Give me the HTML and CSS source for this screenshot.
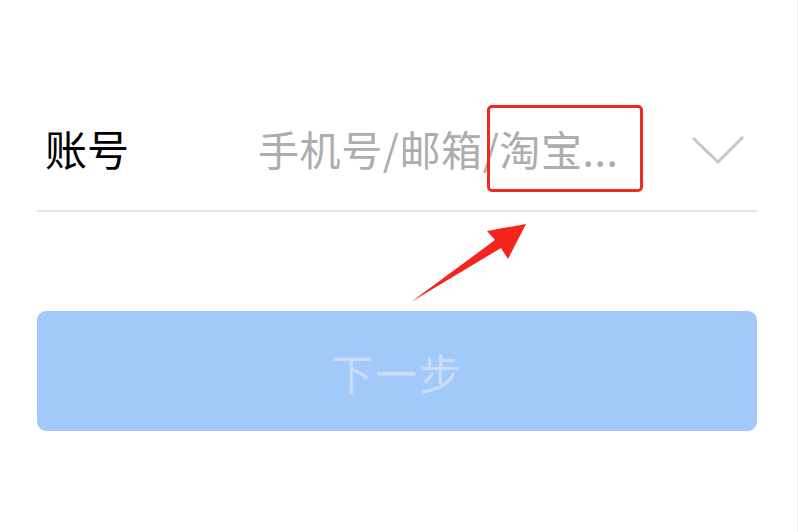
FILE: index.html
```html
<!DOCTYPE html>
<html lang="zh-CN">
<head>
<meta charset="utf-8">
<title>账号</title>
<link rel="stylesheet" href="styles.css">
</head>
<body>
<div class="page">
  <div class="form">
    <div class="field">
      <span class="label">账号</span>
      <span class="placeholder">手机号/邮箱/淘宝...</span>
      <svg class="chevron" width="56" height="32" viewBox="0 0 56 32">
        <polyline points="3,3 28,27 53,2" fill="none" stroke="#c6c6c6" stroke-width="3"/>
      </svg>
    </div>
    <button class="next">下一步</button>
  </div>
  <div class="highlight"></div>
  <svg class="arrow" width="798" height="532" viewBox="0 0 798 532">
    <polygon points="411,302 495,240 487,231 526,224 508,259 501,248" fill="#f5241c"/>
  </svg>
</div>
</body>
</html>
```

FILE: styles.css
```css
html, body {
  margin: 0;
  padding: 0;
  background: #ffffff;
}

.page {
  position: relative;
  width: 797px;
  height: 532px;
  border-right: 1px solid #efefef;
  font-family: "Noto Sans CJK SC", "Noto Sans", sans-serif;
}

.form {
  display: flex;
  flex-direction: column;
  padding: 96px 0 0 37px;
  width: 720px;
}

.field {
  display: flex;
  align-items: center;
  height: 116px;
  padding-bottom: 10px;
  box-sizing: border-box;
  border-bottom: 2px solid #e3e3e3;
}

.label {
  flex: 0 0 221px;
  padding-left: 8px;
  box-sizing: border-box;
  font-size: 42px;
  line-height: 42px;
  color: #000000;
}

.placeholder {
  flex: 1;
  font-size: 41px;
  line-height: 42px;
  letter-spacing: 0.6px;
  color: #adadad;
}

.chevron {
  margin-right: 11px;
  margin-top: 6px;
  display: block;
}

.next {
  margin-top: 99px;
  height: 120px;
  border: none;
  border-radius: 9px;
  background: #a1c9fa;
  color: #cadcf6;
  font-family: "Noto Sans CJK SC", "Noto Sans", sans-serif;
  font-size: 42px;
  letter-spacing: 2px;
  padding: 0;
}

.highlight {
  position: absolute;
  left: 487px;
  top: 105px;
  width: 150px;
  height: 81px;
  border: 3px solid #f02a22;
  border-radius: 5px;
}

.arrow {
  position: absolute;
  left: 0;
  top: 0;
}
```
